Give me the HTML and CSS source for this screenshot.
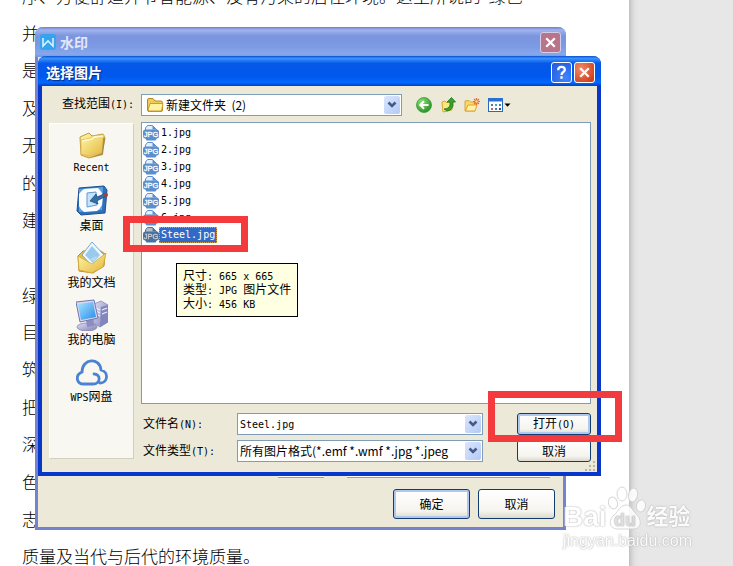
FILE: index.html
```html
<!DOCTYPE html>
<html lang="zh-CN">
<head>
<meta charset="utf-8">
<title>选择图片</title>
<link rel="stylesheet" href="styles.css">
</head>
<body>
<svg class="defs" aria-hidden="true">
  <defs>
    <linearGradient id="gold" x1="0" y1="0" x2="1" y2="1"><stop offset="0" stop-color="#fff7a8"/><stop offset="1" stop-color="#e3b53c"/></linearGradient>
    <linearGradient id="sky" x1="0" y1="0" x2="1" y2="1"><stop offset="0" stop-color="#a5e4ff"/><stop offset="1" stop-color="#2a8bea"/></linearGradient>
    <linearGradient id="steel" x1="0" y1="0" x2="1" y2="1"><stop offset="0" stop-color="#dfe0f6"/><stop offset="1" stop-color="#7f80b4"/></linearGradient>
    <radialGradient id="leaf" cx=".35" cy=".3" r=".8"><stop offset="0" stop-color="#8fe07a"/><stop offset="1" stop-color="#1c8a1c"/></radialGradient>
    <symbol id="jpg" viewBox="0 0 16 16">
      <path d="M2.500 6V3l2-2.500h5l4 4V6" fill="#e2effc" stroke="#5b8fd0"/>
      <path d="M9.500 .5v4h4z" fill="#5b8fd0"/>
      <rect x="0" y="4.500" width="16" height="9" rx="2.500" fill="#5b8ecb"/>
      <path d="M1.500 12h13l-2 3.500h-9z" fill="#5b8ecb"/>
      <text x="8" y="12" text-anchor="middle" font-size="7.500" font-family="Liberation Sans, sans-serif" fill="#fff" stroke="#fff" stroke-width=".3">JPG</text>
    </symbol>
    <symbol id="chevron" viewBox="0 0 16 18">
      <path d="M4.500 6.500l3.500 3.500 3.500-3.500" fill="none" stroke="#435a8a" stroke-width="2.600"/>
    </symbol>
    <symbol id="cross" viewBox="0 0 20 20">
      <path d="M5.500 5.500l9 9M14.500 5.500l-9 9" stroke="#fff" stroke-width="2.400" fill="none"/>
    </symbol>
  </defs>
</svg>
<main class="desktop">
  <article class="document">
    <p>序、方便舒适并节省能源、没有污染的居住环境。这里所说的“绿色</p>
    <p>并</p><p>是</p><p>及</p><p>无</p><p>的</p><p>建</p><p></p><p>绿</p><p>目</p><p>筑</p><p>把</p><p>深</p><p>色</p><p>志</p>
    <p>质量及当代与后代的环境质量。</p>
  </article>

  <section class="window window-back">
    <header class="titlebar">
      <svg class="wps" viewBox="0 0 16 16" aria-hidden="true"><rect width="16" height="16" rx="3" fill="#35a3ee"/><path d="M3 4v8l5-5 5 5V4" fill="none" stroke="#d9f2ff" stroke-width="1.600"/></svg>
      <h1>水印</h1>
      <button class="caption close" aria-label="关闭"><svg><use href="#cross"/></svg></button>
    </header>
    <div class="back-body">
      <div class="slivers"><i></i><i></i></div>
      <footer>
        <button class="push default">确定</button>
        <button class="push">取消</button>
      </footer>
    </div>
  </section>

  <section class="window window-front">
    <header class="titlebar">
      <h1>选择图片</h1>
      <button class="caption help" aria-label="帮助"><svg viewBox="0 0 20 20"><path d="M6.500 7.500c0-4.500 7-4.500 7-.5 0 2.500-3.500 2.500-3.500 5.500M10 14v2.500" stroke="#fff" stroke-width="2.400" fill="none"/></svg></button>
      <button class="caption close" aria-label="关闭"><svg><use href="#cross"/></svg></button>
    </header>
    <div class="dialog">
      <label class="look-label" for="look">查找范围<span class="mono">(I):</span></label>
      <div class="look">
        <div class="combo">
          <svg class="folder" viewBox="0 0 18 16" aria-hidden="true"><path d="M1.500 13V3q0-1.500 1.500-1.500h4L9 4h6q1.500 0 1.500 1.500V13q0 1.500-1.500 1.500H3Q1.500 14.500 1.500 13z" fill="#f0cb55" stroke="#b58a26"/><path d="M2 13l2-6.500h13L15.500 14H3z" fill="#fff2a0" stroke="#c79d35"/></svg>
          <select id="look"><option>新建文件夹&nbsp; (2)</option></select>
          <svg class="drop" aria-hidden="true"><use href="#chevron"/></svg>
        </div>
        <div class="tools">
          <button aria-label="后退"><svg viewBox="0 0 16 16"><circle cx="8" cy="8" r="7.500" fill="url(#leaf)" stroke="#3b9a35" stroke-width=".8"/><path d="M12.500 8H4.500M8 4.200L4.200 8 8 11.800" fill="none" stroke="#fff" stroke-width="2"/></svg></button>
          <button aria-label="向上"><svg viewBox="0 0 16 16"><path d="M2 5l3-1 1 1.500 6-.5v8L3 15z" fill="#fce77e" stroke="#d8a92e"/><path d="M4 12q7 0 6-7H7l4.500-4.500L15.500 5H13q1 8-6 9z" fill="#35a52c" stroke="#1b751c" stroke-width=".8"/></svg></button>
          <button aria-label="新建文件夹"><svg viewBox="0 0 16 16"><path d="M1 4l4-.5L6.500 5H11v9H1z" fill="#fbd968" stroke="#dba33a"/><path d="M1.500 14L4 8h9l-2 6z" fill="#fff1a6" stroke="#dba33a"/><path d="M12.500 1v7M9 4.500h7M10 2l5 5M15 2l-5 5" stroke="#ec6a31" stroke-width="1.200"/><circle cx="12.500" cy="4.500" r="1.200" fill="#ffd9a0"/></svg></button>
          <button class="views" aria-label="查看"><svg viewBox="0 0 23 16"><rect x=".5" y="1.500" width="14" height="13" fill="#fff" stroke="#2869b8"/><path d="M0 1h15v3.500H0z" fill="#2b70cf"/><path d="M3 7h2v2H3zM11 7h2v2h-2zM7 11h2v2H7z" fill="#4b7cae"/><path d="M7 7h2v2H7z" fill="#4aa3a0"/><path d="M3 11h2v2H3z" fill="#b26a6a"/><path d="M11 11h2v2h-2z" fill="#1f4fa0"/><path d="M16.500 6.500h6l-3 3.200z" fill="#000"/></svg></button>
        </div>
      </div>

      <nav class="places">
        <button><svg viewBox="0 0 32 32"><path d="M5 27L4 9l9-4 3 3 11-2 2 4-3 16-13 4z" fill="url(#gold)" stroke="#c39a3a"/><path d="M5 12l10-2 3-2 10-1-2 17-13 4-8-2z" fill="url(#gold)" stroke="#dcb95a" stroke-width=".8"/><path d="M6 13l10-2 2-2 9-1" fill="none" stroke="#fffbd0" stroke-width="1.500"/><path d="M27 10l2 0-2 17-13 3 12-5z" fill="#8d7429" opacity=".6"/></svg><span class="mono">Recent</span></button>
        <button><svg viewBox="0 0 32 32"><path d="M3 3l25-2 3 4-2 23-24 2-4-4z" fill="#2d71bd" stroke="#1d4f92"/><path d="M3 4l24-2-1 23-23 2z" fill="#5da2df"/><path d="M3 9q2-3 5-5l14-1q3 3 5 7l-1 10q-2 4-5 6l-13 1q-4-3-5-6z" fill="#fbfdff"/><path d="M11 8l9-1 1 13-10 2z" fill="#c5e4fb" stroke="#6399cf"/><path d="M30 8l-9 4-1-3-6 7 8 3-1-3 9-5z" fill="#346fa9" stroke="#1b4674" stroke-width=".7"/><circle cx="30" cy="10" r="2" fill="#b13b38"/></svg><span>桌面</span></button>
        <button><svg viewBox="0 0 32 32"><path d="M3 29L2 14l5-5 18 0 4 3-1 12-11 7z" fill="#e5bd48" stroke="#b18f32"/><path d="M6 13L16 0l12 13-11 12z" fill="#eef8ff" stroke="#78a8d2"/><path d="M9 13l7-9 8 9-7 8z" fill="#99caee"/><path d="M2 14l14 8 14-11-3 14-11 6-13-3z" fill="url(#gold)" stroke="#d3a83a" stroke-width=".8"/><path d="M14 17l7-3-3 6z" fill="#b7daf4"/></svg><span>我的文档</span></button>
        <button><svg viewBox="0 0 32 32"><path d="M18 5l7-3 7 4v17l-8 5-7-4z" fill="url(#steel)" stroke="#8080b3" stroke-width=".7"/><path d="M25 8l7-2v17l-8 5z" fill="#8385bd"/><path d="M20 9l4 2M20 12l4 2M20 15l4 2M26 11l5-2M26 15l5-2" stroke="#f0f0ff" stroke-width="1.200"/><ellipse cx="11" cy="28" rx="10" ry="4" fill="url(#steel)" stroke="#7d79ad" stroke-width=".7"/><path d="M10 21l7-1 1 7-7 1z" fill="#8c8dc0"/><path d="M0 3l18-2 4 18-18 4z" fill="#d5d8ef" stroke="#7276ae"/><path d="M2 5l15-2 3 15-15 3z" fill="url(#sky)"/></svg><span>我的电脑</span></button>
        <button><svg viewBox="0 0 32 32"><path d="M17 28H8C0 28-1 19 6 16C6 2 24 1 25 14c8 2 7 13-1 13M8 28h9c8 0 8-10 1-10" fill="none" stroke="#4a83d4" stroke-width="2.800" stroke-linecap="round"/></svg><span><span class="mono">WPS</span>网盘</span></button>
      </nav>

      <ul class="files">
        <li><svg><use href="#jpg"/></svg><span class="mono">1.jpg</span></li>
        <li><svg><use href="#jpg"/></svg><span class="mono">2.jpg</span></li>
        <li><svg><use href="#jpg"/></svg><span class="mono">3.jpg</span></li>
        <li><svg><use href="#jpg"/></svg><span class="mono">4.jpg</span></li>
        <li><svg><use href="#jpg"/></svg><span class="mono">5.jpg</span></li>
        <li><svg><use href="#jpg"/></svg><span class="mono">6.jpg</span></li>
        <li class="selected"><svg><use href="#jpg"/></svg><span class="mono">Steel.jpg</span></li>
      </ul>

      <form class="fields">
        <label for="name">文件名<span class="mono">(N):</span></label>
        <div class="combo"><input id="name" class="mono" value="Steel.jpg"><svg class="drop" aria-hidden="true"><use href="#chevron"/></svg></div>
        <button class="push small default" type="button">打开<span class="mono">(O)</span></button>
        <label for="type">文件类型<span class="mono">(T):</span></label>
        <div class="combo"><select id="type"><option>所有图片格式(*.emf *.wmf *.jpg *.jpeg</option></select><svg class="drop" aria-hidden="true"><use href="#chevron"/></svg></div>
        <button class="push small" type="button">取消</button>
      </form>
    </div>
    <svg class="grip" viewBox="0 0 12 12" aria-hidden="true"><path d="M9 1h2v2H9zM5 5h2v2H5zM9 5h2v2H9zM1 9h2v2H1zM5 9h2v2H5zM9 9h2v2H9z" fill="#b8b4a0"/></svg>
  </section>

  <div class="tooltip" role="tooltip">
    <div>尺寸<span class="mono">: 665 x 665</span></div>
    <div>类型<span class="mono">: JPG </span>图片文件</div>
    <div>大小<span class="mono">: 456 KB</span></div>
  </div>
  <div class="mark mark-file"></div>
  <div class="mark mark-open"></div>

  <div class="watermark">
    <div class="brand">
      <span>Bai</span>
      <svg viewBox="0 0 40 44" aria-hidden="true"><g fill="#fff" stroke="#d0d0d0" stroke-width="1"><ellipse cx="6" cy="17" rx="4.500" ry="6" transform="rotate(-15 6 17)"/><ellipse cx="15" cy="8" rx="5" ry="7"/><ellipse cx="26" cy="9" rx="4.500" ry="7" transform="rotate(12 26 9)"/><ellipse cx="34" cy="20" rx="4.500" ry="6" transform="rotate(12 34 20)"/><path d="M19 19c5 0 6 5 10 9 5 4 7 14-2 15H10c-9-1-8-10-3-14 5-4 6-10 12-10z"/></g><text x="18" y="40" text-anchor="middle" font-size="18" font-weight="bold" font-family="Liberation Sans, sans-serif" fill="#dadada">du</text></svg>
      <span class="cn">经验</span>
    </div>
    <div class="site">jingyan.baidu.com</div>
  </div>
</main>
</body>
</html>
```
FILE: styles.css
```css
* { box-sizing: border-box; }
body {
  margin: 0;
  font: 12px/16px "Noto Sans CJK SC", sans-serif;
  color: #000;
}
button, input, select { font: inherit; color: inherit; margin: 0; }
.defs { position: absolute; width: 0; height: 0; }
.mono {
  font-family: "DejaVu Sans Mono", monospace;
  font-size: 10px;
  white-space: pre;
}
.desktop {
  position: relative;
  height: 100vh;
  overflow: hidden;
  background: #e7e7e7;
}

/* Page of text behind the windows */
.document {
  display: grid;
  grid-auto-rows: 1fr;
  align-items: center;
  height: calc(100vh + 32px);
  margin: -21px 104px 0 0;
  padding-left: 22px;
  background: #fff;
  box-shadow: 0 0 8px #999;
  font-family: "Liberation Serif", "Noto Sans CJK SC", serif;
  font-size: 17px;
  font-weight: 300;
}
.document p { margin: 0; white-space: nowrap; }

/* Windows */
.window {
  position: absolute;
  display: flex;
  flex-direction: column;
  background: #ece9d8;
  border-radius: 8px 8px 0 0;
}
.window-back {
  left: 35px;
  top: 27px;
  width: 531px;
  height: 503px;
  border: 3px solid #7483cf;
  border-top: 0;
}
.window-front {
  left: 38px;
  top: 56px;
  width: 563px;
  border: 4px solid #0937c9;
  border-top: 0;
}
.titlebar {
  display: flex;
  align-items: center;
  gap: 2px;
  height: 30px;
  margin: 0 -4px;
  padding: 2px 6px 0 8px;
  border-radius: 8px 8px 0 0;
  background: linear-gradient(#0a4fd0, #3a92ff 8%, #0659e8 25%, #0058ee 70%, #0369ff 88%, #003fc4);
}
.window-back .titlebar {
  margin: 0 -3px;
  padding: 0 5px;
  background: linear-gradient(#6c80c8, #a0b4ee 10%, #7b94df 30%, #7d9ae4 65%, #86a8ec 90%, #7895da);
}
.titlebar h1 {
  flex: 1;
  margin: 0;
  font-size: 14px;
  line-height: 20px;
  font-weight: 700;
  color: #fff;
  text-shadow: 1px 1px 1px #0b2a80;
}
.window-back h1 { padding-left: 2px; color: #e2e8f8; text-shadow: none; }
.wps { width: 16px; height: 16px; }
.caption {
  width: 21px;
  height: 21px;
  padding: 0;
  border: 1px solid #fff;
  border-radius: 3px;
}
.caption svg { display: block; width: 19px; height: 19px; }
.help { background: radial-gradient(circle at 70% 80%, #3f83ff, #2458d8); }
.close { background: radial-gradient(circle at 30% 30%, #f08b6c, #d3411c 80%); }
.window-back .close { border-color: #d4cdea; background: #b87488; }

.back-body { display: flex; flex: 1; flex-direction: column; justify-content: flex-end; }
.slivers { display: flex; gap: 23px; padding: 0 13px 0 240px; }
.slivers i { width: 46px; height: 2px; background: #fff; border-bottom: 1px solid #8ba0bd; }
.slivers i:last-child { flex: 1; }
.back-body footer { display: flex; justify-content: flex-end; gap: 8px; padding: 11px 8px 8px; }

.push {
  width: 77px;
  height: 30px;
  padding: 0;
  border: 1px solid #123c70;
  border-radius: 3px;
  background: linear-gradient(#fff, #f5f4ef 75%, #dcd8cc);
}
.push.default { box-shadow: inset 0 0 0 2px #b0c8f0; }
.small { width: 74px; height: 22px; line-height: 18px; }

/* File dialog */
.dialog {
  display: grid;
  grid-template-columns: 85px 1fr;
  grid-template-rows: 22px 282px auto;
  gap: 6px 7px;
  padding: 8px 6px 10px 7px;
}
.look-label { padding: 1px 0 0 13px; white-space: nowrap; }
.look { display: flex; gap: 14px; align-items: center; }
.look .combo { width: 261px; }
.combo {
  display: flex;
  align-items: center;
  height: 22px;
  padding: 0 1px 0 2px;
  background: #fff;
  border: 1px solid #7f9db9;
}
.combo select, .combo input {
  flex: 1;
  min-width: 0;
  height: 20px;
  padding: 0;
  border: 0;
  outline: 0;
  background: none;
  appearance: none;
  white-space: pre;
}
.folder { width: 18px; height: 16px; margin: 0 2px; }
.drop {
  flex: none;
  width: 16px;
  height: 18px;
  border-radius: 2px;
  background: linear-gradient(135deg, #dbe6fd, #b3c9f5);
}
.tools { display: flex; gap: 8px; }
.tools button { padding: 0; border: 0; background: none; }
.tools svg { display: block; width: 16px; height: 16px; }
.tools .views svg { width: 23px; }

.places {
  grid-row: 2 / 4;
  display: flex;
  flex-direction: column;
  gap: 9px;
  margin: 1px 0 3px;
  padding-top: 4px;
  background: #f8f7f1;
  border: 1px solid #fff;
  border-color: #fff #d3cfbd #d3cfbd #fff;
}
.places button {
  display: flex;
  flex-direction: column;
  align-items: center;
  padding: 0;
  border: 0;
  background: none;
}
.places svg { width: 32px; height: 32px; }
.files {
  margin: 0;
  padding: 1px;
  list-style: none;
  background: #fff;
  border: 1px solid #7f9db9;
}
.files li { display: flex; align-items: center; height: 17px; }
.files svg { width: 16px; height: 16px; }
.files .mono { padding: 0 2px; }
.selected .mono { background: #316ac5; color: #fff; outline: 1px dotted #d9a054; outline-offset: -1px; }
.selected svg { filter: brightness(.8); }
.fields {
  display: grid;
  grid-template-columns: 94px 246px 74px;
  gap: 5px 0;
  align-items: center;
  margin-top: 3px;
  padding-left: 2px;
}
.fields .push { margin-left: 34px; }
.grip { position: absolute; right: 1px; bottom: 0; width: 12px; height: 12px; }

.tooltip {
  position: absolute;
  left: 176px;
  top: 263px;
  padding: 4px 6px 6px;
  line-height: 14px;
  background: #ffffe1;
  border: 1px solid #000;
}
.tooltip div { height: 14px; white-space: nowrap; }

/* Highlight frames */
.mark { position: absolute; border: 7px solid #f33a3c; }
.mark-file { left: 123px; top: 216px; width: 125px; height: 36px; }
.mark-open { left: 488px; top: 391px; width: 134px; height: 51px; }

.watermark {
  position: absolute;
  left: 563px;
  top: 486px;
  color: #fff;
  text-shadow: 0 0 1px #aaa, 0 0 2px #aaa;
  opacity: .85;
  font-family: "Liberation Sans", "Noto Sans CJK SC", sans-serif;
}
.brand { display: flex; align-items: flex-end; height: 44px; font-size: 28px; line-height: 27px; font-weight: 700; }
.brand svg { width: 40px; height: 44px; }
.cn { font-size: 22px; }
.site { font-size: 16px; line-height: 22px; }
```
